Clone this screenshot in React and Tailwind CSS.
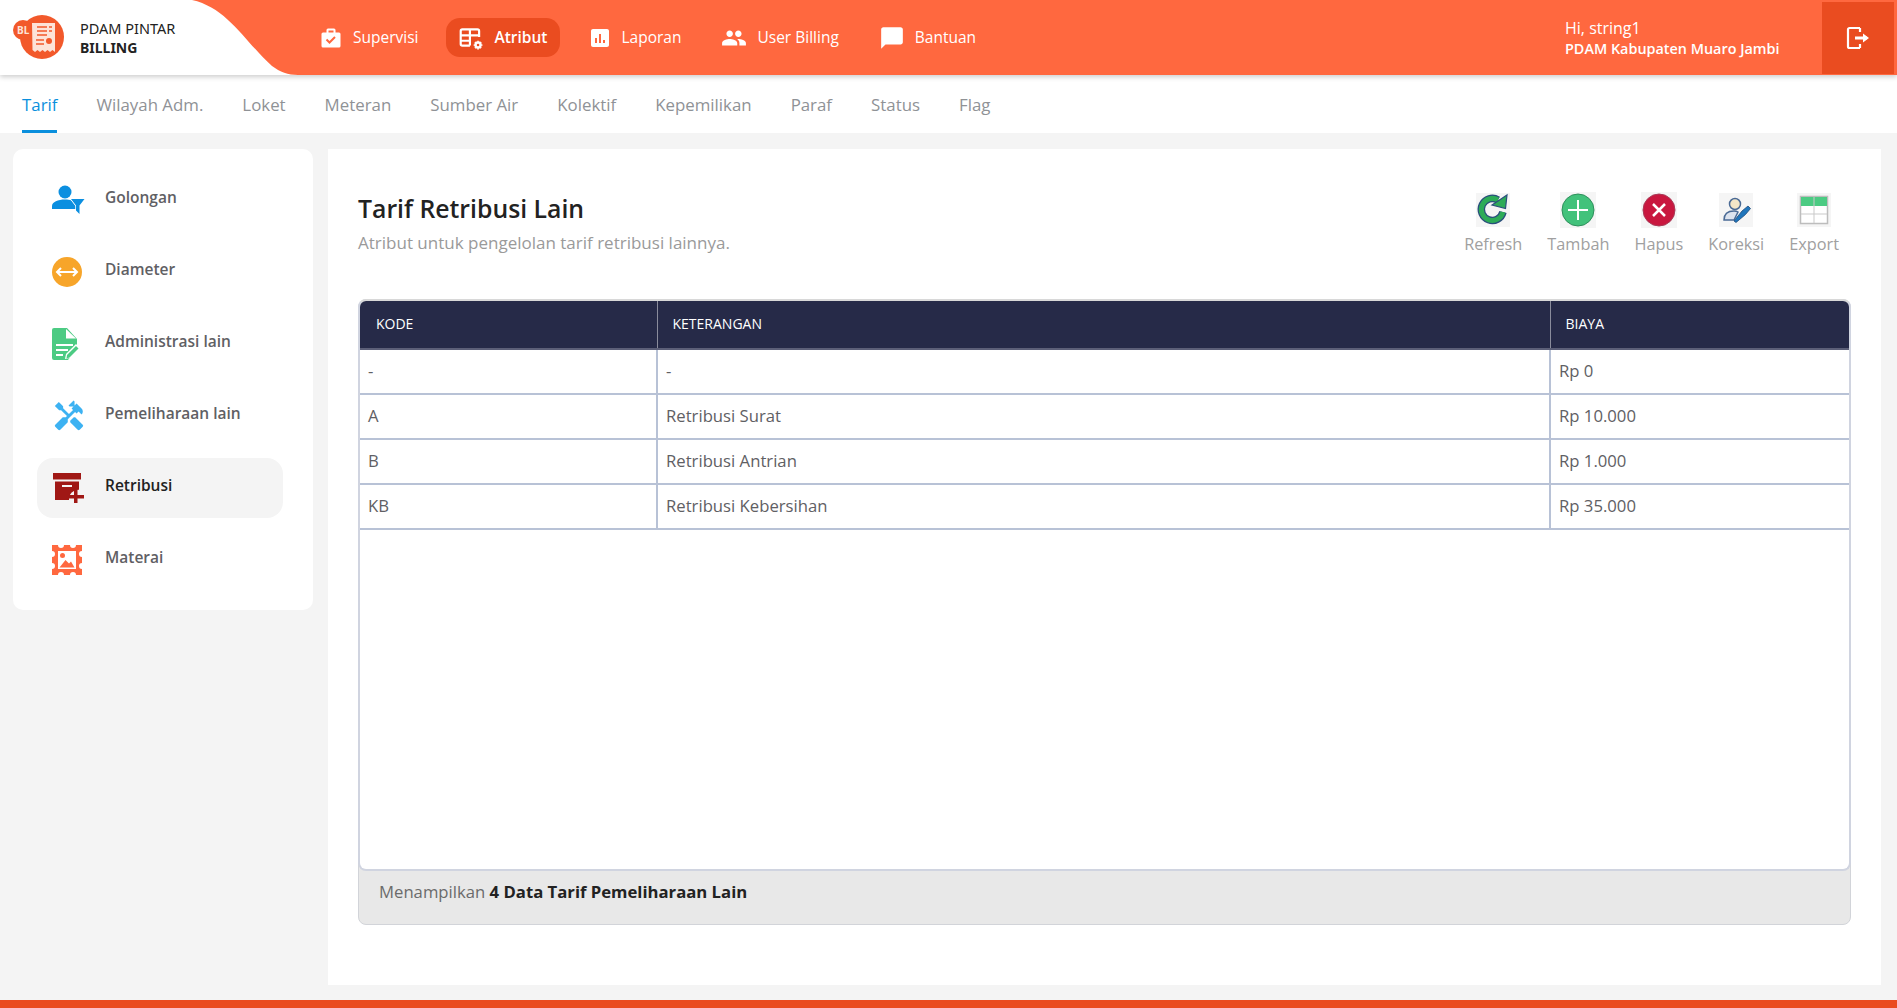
import { MdHandyman } from "react-icons/md";

const NAV = [
  { label: "Supervisi", icon: "work" },
  { label: "Atribut", icon: "table", active: true },
  { label: "Laporan", icon: "chart" },
  { label: "User Billing", icon: "people" },
  { label: "Bantuan", icon: "chat" },
];

const TABS = ["Tarif", "Wilayah Adm.", "Loket", "Meteran", "Sumber Air", "Kolektif", "Kepemilikan", "Paraf", "Status", "Flag"];

const SIDE = [
  { label: "Golongan", icon: <GolonganIcon /> },
  { label: "Diameter", icon: <DiameterIcon /> },
  { label: "Administrasi lain", icon: <AdminIcon /> },
  { label: "Pemeliharaan lain", icon: <MdHandyman className="w-[34px] h-[34px] text-[#3db2f2]" /> },
  { label: "Retribusi", icon: <RetribusiIcon />, active: true },
  { label: "Materai", icon: <MateraiIcon /> },
];

const ROWS = [
  ["-", "-", "Rp 0"],
  ["A", "Retribusi Surat", "Rp 10.000"],
  ["B", "Retribusi Antrian", "Rp 1.000"],
  ["KB", "Retribusi Kebersihan", "Rp 35.000"],
];

function NavIcon({ name }) {
  if (name === "work")
    return (
      <svg viewBox="0 0 24 24" className="w-[24px] h-[24px]" fill="white">
        <path fillRule="evenodd" d="M9 2.500h6a1.500 1.500 0 0 1 1.500 1.500v2.500H20a1.500 1.500 0 0 1 1.500 1.500v12a1.500 1.500 0 0 1-1.500 1.500H4A1.500 1.500 0 0 1 2.500 20V8A1.500 1.500 0 0 1 4 6.500h3.500V4A1.500 1.500 0 0 1 9 2.500zM9.500 4.500v2h5v-2z" />
        <path d="M7.500 13.500l3 3 5.500-5.500" fill="none" stroke="#ff683f" strokeWidth="2" />
      </svg>
    );
  if (name === "table")
    return (
      <svg viewBox="0 0 24 24" className="w-[26px] h-[26px]" fill="none" stroke="white" strokeWidth="2">
        <path d="M11 19H4a1.500 1.500 0 0 1-1.500-1.500v-12A1.500 1.500 0 0 1 4 4h14a1.500 1.500 0 0 1 1.500 1.500V11" />
        <path d="M2.500 9.500h17M2.500 14.500h9M11 4v15" />
        <circle cx="18.500" cy="18.500" r="2.300" strokeWidth="2.200" />
        <path d="M18.500 14.500v1M18.500 21.500v1M14.500 18.500h1M21.500 18.500h1M15.700 15.700l.7.7M20.600 20.600l.7.7M15.700 21.300l.7-.7M20.600 16.400l.7-.7" strokeWidth="1.600" />
      </svg>
    );
  if (name === "chart")
    return (
      <svg viewBox="0 0 24 24" className="w-[24px] h-[24px]" fill="white">
        <path d="M19 3H5c-1.100 0-2 .9-2 2v14c0 1.100.9 2 2 2h14c1.100 0 2-.9 2-2V5c0-1.100-.9-2-2-2zM9 17H7v-5h2v5zm4 0h-2V8h2v9zm4 0h-2v-3h2v3z" />
      </svg>
    );
  if (name === "people")
    return (
      <svg viewBox="0 0 24 24" className="w-[26px] h-[26px]" fill="white">
        <path d="M16 11c1.660 0 2.990-1.340 2.990-3S17.660 5 16 5c-1.660 0-3 1.340-3 3s1.340 3 3 3zm-8 0c1.660 0 2.990-1.340 2.990-3S9.660 5 8 5C6.340 5 5 6.340 5 8s1.340 3 3 3zm0 2c-2.330 0-7 1.170-7 3.500V19h14v-2.500c0-2.330-4.670-3.500-7-3.500zm8 0c-.29 0-.62.02-.97.05 1.160.84 1.970 1.970 1.970 3.450V19h6v-2.500c0-2.330-4.670-3.500-7-3.500z" />
      </svg>
    );
  return (
    <svg viewBox="0 0 24 24" className="w-[26px] h-[26px]" fill="white">
      <path d="M20 2H4c-1.100 0-2 .9-2 2v18l4-4h14c1.100 0 2-.9 2-2V4c0-1.100-.9-2-2-2z" />
    </svg>
  );
}

function GolonganIcon() {
  return (
    <svg viewBox="0 0 33 30" className="w-[33px] h-[30px]" fill="#0b8fe0">
      <circle cx="13" cy="7" r="6.500" />
      <path d="M0 24v-3c0-4 6-6.500 13-6.500 2.500 0 4.500.3 6.500.9L26 24z" />
      <path d="M19 14h13.500l-5 6.500V29L24 25.500v-5z" stroke="white" strokeWidth="1.500" paintOrder="stroke" />
    </svg>
  );
}

function DiameterIcon() {
  return (
    <svg viewBox="0 0 30 30" className="w-[30px] h-[30px]">
      <circle cx="15" cy="15" r="15" fill="#f7a52a" />
      <path d="M5 15h20M9 11l-4 4 4 4M21 11l4 4-4 4" fill="none" stroke="white" strokeWidth="2" />
    </svg>
  );
}

function AdminIcon() {
  return (
    <svg viewBox="0 0 28 32" className="w-[28px] h-[32px]">
      <path d="M2 0h13l10 11v9l-9 12H2a2 2 0 0 1-2-2V2a2 2 0 0 1 2-2z" fill="#4ccb83" />
      <path d="M14 1v9.500h10z" fill="white" />
      <path d="M4 17h17M4 22h12M4 27h7" stroke="white" strokeWidth="2" />
      <path d="M13 31l1-5 10-10 4 4-10 10z" fill="white" />
      <path d="M14.500 30.500l.5-3.500 9-9 2.500 2.500-9 9z" fill="#4ccb83" />
    </svg>
  );
}

function RetribusiIcon() {
  return (
    <svg viewBox="0 0 32 30" className="w-[32px] h-[30px]" fill="#a01815">
      <rect x="1" y="0" width="28" height="6.500" />
      <path fillRule="evenodd" d="M3 8.500h24v8.200a9.500 9.500 0 0 0-10 10.300H3zM10 12v2h10v-2z" />
      <path d="M22 17h3.500v5H32v3.500h-6.500V30H22v-4.500h-5.500V22H22z" />
    </svg>
  );
}

function MateraiIcon() {
  return (
    <svg viewBox="0 0 30 30" className="w-[30px] h-[30px]">
      <path
        fill="#ff683f"
        d="M0 0h6a3 3 0 0 0 6 0h6a3 3 0 0 0 6 0h6v6a3 3 0 0 0 0 6v6a3 3 0 0 0 0 6v6h-6a3 3 0 0 0-6 0h-6a3 3 0 0 0-6 0H0v-6a3 3 0 0 0 0-6v-6a3 3 0 0 0 0-6z"
      />
      <rect x="6" y="6" width="18" height="18" fill="white" />
      <circle cx="10.500" cy="10.500" r="2.500" fill="#ff683f" />
      <path d="M7.500 22.500l6-7.500 3.500 3.500 2-2 3.500 6z" fill="#ff683f" />
    </svg>
  );
}

function RefreshIcon() {
  return (
    <svg viewBox="0 0 34 34" className="w-[34px] h-[34px]">
      <rect width="34" height="34" fill="#f5f5f5" />
      <path d="M27 19a11 11 0 1 1-5-12" fill="none" stroke="#2a4f7c" strokeWidth="7.500" />
      <path d="M27 19a11 11 0 1 1-5-12" fill="none" stroke="#2dab57" strokeWidth="5" />
      <path d="M31 2l-1.500 13.500L16 12z" fill="#2dab57" stroke="#2a4f7c" strokeWidth="1.200" />
    </svg>
  );
}

function TambahIcon() {
  return (
    <svg viewBox="0 0 36 36" className="w-[36px] h-[36px]">
      <rect width="36" height="36" fill="#f5f5f5" />
      <circle cx="18" cy="18" r="16" fill="#42c27b" stroke="#2f8f5c" strokeWidth="1" />
      <path d="M18 8v20M8 18h20" stroke="white" strokeWidth="2" />
    </svg>
  );
}

function HapusIcon() {
  return (
    <svg viewBox="0 0 36 36" className="w-[36px] h-[36px]">
      <rect width="36" height="36" fill="#f5f5f5" />
      <circle cx="18" cy="18" r="16" fill="#c9173f" stroke="#a83c58" strokeWidth="1" />
      <path d="M12 12l12 12M24 12L12 24" stroke="white" strokeWidth="2.500" />
    </svg>
  );
}

function KoreksiIcon() {
  return (
    <svg viewBox="0 0 34 34" className="w-[34px] h-[34px]">
      <rect width="34" height="34" fill="#f5f5f5" />
      <circle cx="16" cy="11" r="5.500" fill="#f3e6c8" stroke="#4a6a95" strokeWidth="1.500" />
      <path d="M5 27c0-6 4-9 10-9 2 0 3 .3 4 1l-4 8z" fill="#dce3ee" stroke="#4a6a95" strokeWidth="1.500" />
      <path d="M15 28l8-10 6-5 2.500 2.500-5 6-9.500 8z" fill="#1f75bb" stroke="#204b7b" strokeWidth="0.800" />
    </svg>
  );
}

function ExportIcon() {
  return (
    <svg viewBox="0 0 34 34" className="w-[34px] h-[34px]">
      <rect width="34" height="34" fill="#f5f5f5" />
      <rect x="3.500" y="3.500" width="27" height="27" fill="white" stroke="#bdbdbd" strokeWidth="1.500" />
      <rect x="4" y="4" width="26" height="9" fill="#4ccb83" />
      <path d="M4 21h26M17 4v26" stroke="#c9c9c9" strokeWidth="1" />
    </svg>
  );
}

function Logo() {
  return (
    <svg viewBox="0 0 60 50" className="w-[60px] h-[50px]">
      <circle cx="32" cy="23" r="22" fill="#f2592b" />
      <circle cx="13" cy="16" r="10" fill="#f2592b" />
      <path d="M22 9h23v29l-2.500-2-2.500 2-2.500-2-2.500 2-2.500-2-2.500 2-2.500-2-2.500 2-2.500-2z" fill="#fde3d8" />
      <path d="M27 13h10M27 17h10M27 21h10M26 26h8M26 30h8M39 13h3M39 17h3" stroke="#f2592b" strokeWidth="1.500" />
      <circle cx="39" cy="27" r="3" fill="#f2592b" />
      <text x="7" y="20" fontSize="10" fontWeight="700" fill="#fde3d8" fontFamily="Noto Sans, sans-serif">BL</text>
    </svg>
  );
}

export default function App() {
  return (
    <div className="h-screen w-full overflow-hidden flex flex-col bg-[#f4f4f4] font-['Open_Sans',sans-serif]">
      <header className="relative z-10 h-[75px] shrink-0 flex items-center bg-[#ff683f] shadow-[0_2px_5px_rgba(0,0,0,0.2)]">
        <div className="relative h-full w-[300px] shrink-0 flex items-center">
          <svg viewBox="0 0 300 75" className="absolute inset-0 w-full h-full">
            <path d="M0 0H192C228 8 245 42 272 66C280 72 288 75 298 75H0z" fill="white" />
          </svg>
          <div className="relative flex items-center">
            <div className="ml-[10px] mt-[2px]">
              <Logo />
            </div>
            <div className="ml-[10px] text-[14.500px] leading-[20px] text-[#222] font-['Noto_Sans',sans-serif]">
              <div>PDAM PINTAR</div>
              <div className="font-bold text-[14px]">BILLING</div>
            </div>
          </div>
        </div>
        <nav className="flex items-center gap-[16px] ml-[7px]">
          {NAV.map((n) => (
            <div
              key={n.label}
              className={`flex items-center gap-[10px] h-[39px] px-[12px] rounded-[14px] text-[15.500px] text-white ${
                n.active ? "bg-[#ea4c20] font-semibold" : ""
              }`}
            >
              <NavIcon name={n.icon} />
              <span>{n.label}</span>
            </div>
          ))}
        </nav>
        <div className="ml-auto w-[257px] text-white">
          <div className="text-[16px] leading-[22px]">Hi, string1</div>
          <div className="text-[14.400px] leading-[20px] font-semibold whitespace-nowrap">PDAM Kabupaten Muaro Jambi</div>
        </div>
        <div className="w-[72px] h-[72px] mr-[3px] bg-[#ea4c20] flex items-center justify-center">
          <svg viewBox="0 0 26 26" className="w-[26px] h-[26px]" fill="none" stroke="white" strokeWidth="2.200">
            <path d="M15 3H4.500A1.500 1.500 0 0 0 3 4.500v17A1.500 1.500 0 0 0 4.500 23H15M15 3v4M15 23v-4" />
            <path d="M10 13h12" strokeWidth="3" />
            <path d="M18 8.500l6 4.500-6 4.500z" fill="white" stroke="none" />
          </svg>
        </div>
      </header>

      <div className="h-[58px] shrink-0 bg-white flex items-stretch gap-[39px] pl-[22px] text-[16.850px] text-[#8f9296]">
        {TABS.map((t, i) => (
          <div
            key={t}
            className={`flex items-center pt-[4px] border-b-[3px] ${
              i === 0 ? "text-[#0a8fdd] border-[#0a8fdd]" : "border-transparent"
            }`}
          >
            {t}
          </div>
        ))}
      </div>

      <div className="flex-1 min-h-0 flex items-start gap-[15px] pl-[13px] pr-[16px] pt-[16px]">
        <aside className="w-[300px] shrink-0 bg-white rounded-[10px] pt-[21px] pb-[20px] pl-[24px] pr-[30px] flex flex-col gap-[12px]">
          {SIDE.map((s) => (
            <div
              key={s.label}
              className={`h-[60px] flex items-center rounded-[16px] text-[15.500px] font-semibold ${
                s.active ? "bg-[#f4f4f4] text-[#222]" : "text-[#5f6064]"
              }`}
            >
              <div className="w-[68px] pl-[15px] shrink-0 flex items-center">{s.icon}</div>
              <span className="-mt-[4px]">{s.label}</span>
            </div>
          ))}
        </aside>

        <main className="flex-1 min-w-0 h-[836px] bg-white flex flex-col pt-[40px] px-[30px] pb-[60px]">
          <div className="h-[110px] shrink-0 flex items-start justify-between">
            <div className="pt-[2px]">
              <h1 className="text-[24.800px] leading-[34px] font-semibold text-[#222]">Tarif Retribusi Lain</h1>
              <p className="mt-[7px] text-[17px] leading-[22px] text-[#9a9a9a]">Atribut untuk pengelolan tarif retribusi lainnya.</p>
            </div>
            <div className="flex gap-[25px] pr-[12px] pt-[2px] text-[16.300px] text-[#a0a0a0]">
              {[
                ["Refresh", <RefreshIcon />],
                ["Tambah", <TambahIcon />],
                ["Hapus", <HapusIcon />],
                ["Koreksi", <KoreksiIcon />],
                ["Export", <ExportIcon />],
              ].map(([label, icon]) => (
                <div key={label} className="flex flex-col items-center">
                  <div className="h-[38px] flex items-center">{icon}</div>
                  <span className="mt-[4px] leading-[22px]">{label}</span>
                </div>
              ))}
            </div>
          </div>

          <div className="flex-1 min-h-0 flex flex-col bg-[#e8e8e8] border border-[#d2d4d9] rounded-[8px]">
            <div className="flex-1 min-h-0 bg-white border-2 border-[#d0d4e0] border-t-[#d8d8d8] rounded-[8px] -m-px overflow-hidden">
              <table className="w-full table-fixed border-collapse text-[16.700px] text-[#5f6064]">
                <colgroup>
                  <col className="w-[297px]" />
                  <col className="w-[893px]" />
                  <col />
                </colgroup>
                <thead>
                  <tr className="h-[48px] bg-[#262a48] text-white text-[14px] text-left">
                    <th className="font-normal pl-[16px] pb-[2px] border-r border-[#8a8c9c] border-b-2 border-b-[#5c5f78]">KODE</th>
                    <th className="font-normal pl-[15px] pb-[2px] border-r border-[#8a8c9c] border-b-2 border-b-[#5c5f78]">KETERANGAN</th>
                    <th className="font-normal pl-[15px] pb-[2px] border-b-2 border-b-[#5c5f78]">BIAYA</th>
                  </tr>
                </thead>
                <tbody>
                  {ROWS.map((r) => (
                    <tr key={r[0]} className="h-[45px]">
                      {r.map((c, i) => (
                        <td key={i} className="pl-[8px] pb-[2px] border-2 border-t-0 border-l-0 last:border-r-0 border-[#b8c2d6]">
                          {c}
                        </td>
                      ))}
                    </tr>
                  ))}
                </tbody>
              </table>
            </div>
            <div className="h-[54px] shrink-0 pl-[20px] pt-[10px] text-[16.700px] leading-[24px] text-[#6b6b6b]">
              Menampilkan <b className="font-bold text-[#222]">4 Data Tarif Pemeliharaan Lain</b>
            </div>
          </div>
        </main>
      </div>

      <div className="h-[8px] shrink-0 bg-[#ea4c20]" />
    </div>
  );
}
